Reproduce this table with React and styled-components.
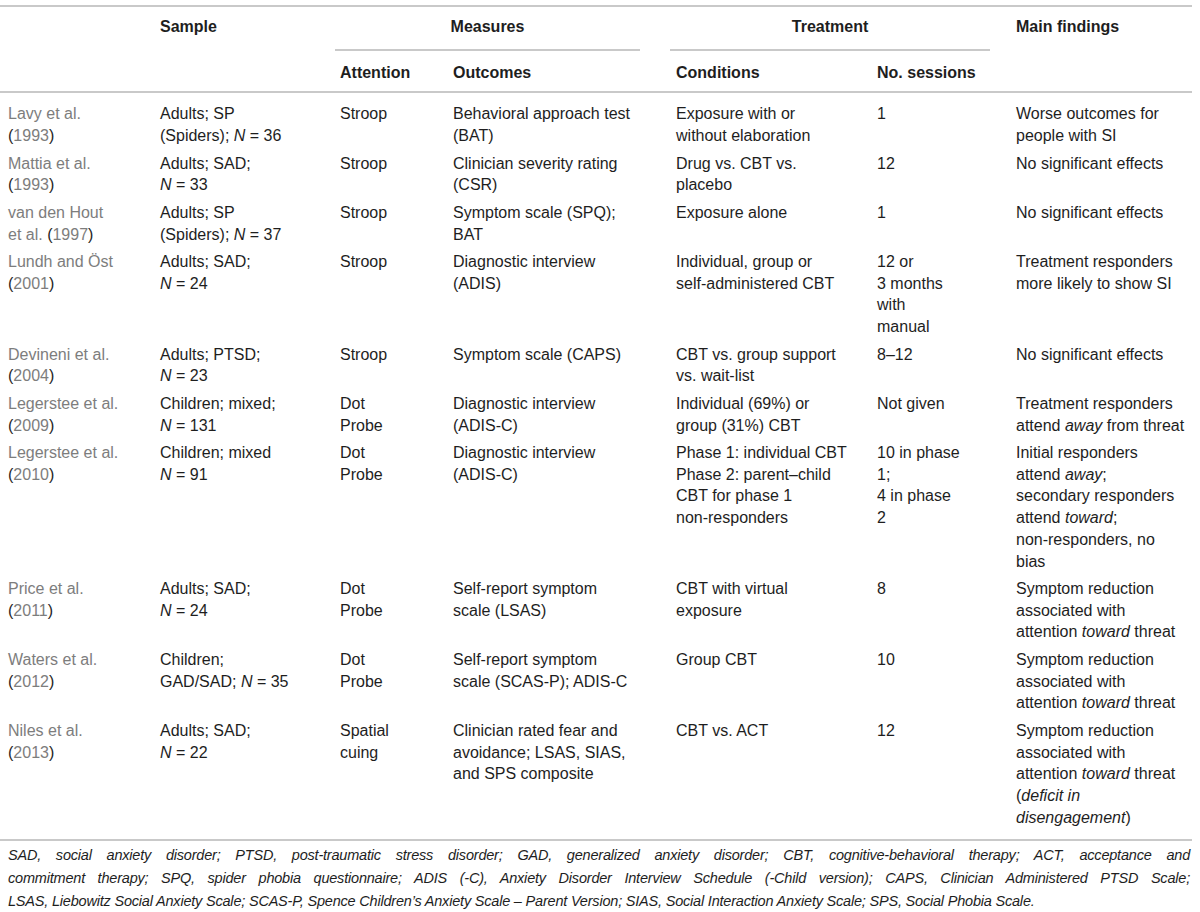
import React from 'react';
import styled, { createGlobalStyle } from 'styled-components';

const GlobalStyle = createGlobalStyle`
  body {
    margin: 0;
    background: #fff;
    font-family: "Liberation Sans", Arial, sans-serif;
    color: #1e1e1e;
  }
`

const RULE = '2px solid #c9c9c9';

const Page = styled.div`
  width: 1192px;
  padding-top: 5px;
`

const Table = styled.table`
  width: 1192px;
  border-collapse: collapse;
  table-layout: fixed;
  font-size: 16px;
  line-height: 21.7px;
  border-top: ${RULE};
`

const Head = styled.thead`
  border-bottom: ${RULE};
`

const Th = styled.th`
  text-align: left;
  vertical-align: top;
  font-weight: bold;
  white-space: nowrap;
  padding: ${p => (p.$sub ? '11px 6px 8px' : '9px 6px 0')};
  padding-left: ${p => (p.$first ? '8px' : '6px')};
`

const GroupTh = styled.th`
  padding: 0;
  vertical-align: top;
  font-weight: bold;
`

const GroupLabel = styled.div`
  margin: 0 ${p => p.$right}px 0 ${p => p.$left}px;
  padding: 9px 0 11px;
  border-bottom: ${RULE};
  text-align: center;
`

const Row = styled.tr`
  & > td {
    padding-top: ${p => p.$top}px;
    padding-bottom: ${p => p.$bottom}px;
  }
`

const Td = styled.td`
  vertical-align: top;
  white-space: nowrap;
  padding-left: 6px;
  padding-right: 6px;

  &:first-child {
    padding-left: 8px;
    color: #7d7d7d;
  }
`

const Paren = styled.span`
  color: #1e1e1e;
`

const I = styled.i`
  font-style: italic;
`

const Line = styled.div``

const Footnote = styled.div`
  border-top: ${RULE};
  padding: 3px 2px 0 8px;
  font-size: 14.5px;
  letter-spacing: -0.2px;
  line-height: 23px;
  font-style: italic;
`

const FootLine = styled.div`
  text-align: ${p => (p.$justify ? 'justify' : 'left')};
  text-align-last: ${p => (p.$justify ? 'justify' : 'left')};
`

const Study = ({ names, year, inline }) => {
  const y = <><Paren>(</Paren>{year}<Paren>)</Paren></>;
  return (
    <>
      {names.map((n, i) => (
        <Line key={i}>
          {n}
          {inline && i === names.length - 1 && <> {y}</>}
        </Line>
      ))}
      {!inline && <Line>{y}</Line>}
    </>
  );
};

const N = ({ v }) => <><I>N</I> = {v}</>;

const rows = [
  {
    study: { names: ['Lavy et al.'], year: '1993' },
    sample: ['Adults; SP', <>(Spiders); <N v="36" /></>],
    attention: ['Stroop'],
    outcomes: ['Behavioral approach test', '(BAT)'],
    conditions: ['Exposure with or', 'without elaboration'],
    sessions: ['1'],
    findings: ['Worse outcomes for', 'people with SI'],
  },
  {
    study: { names: ['Mattia et al.'], year: '1993' },
    sample: ['Adults; SAD;', <N v="33" />],
    attention: ['Stroop'],
    outcomes: ['Clinician severity rating', '(CSR)'],
    conditions: ['Drug vs. CBT vs.', 'placebo'],
    sessions: ['12'],
    findings: ['No significant effects'],
  },
  {
    study: { names: ['van den Hout', 'et al.'], year: '1997', inline: true },
    sample: ['Adults; SP', <>(Spiders); <N v="37" /></>],
    attention: ['Stroop'],
    outcomes: ['Symptom scale (SPQ);', 'BAT'],
    conditions: ['Exposure alone'],
    sessions: ['1'],
    findings: ['No significant effects'],
  },
  {
    study: { names: ['Lundh and Öst'], year: '2001' },
    sample: ['Adults; SAD;', <N v="24" />],
    attention: ['Stroop'],
    outcomes: ['Diagnostic interview', '(ADIS)'],
    conditions: ['Individual, group or', 'self-administered CBT'],
    sessions: ['12 or', '3 months', 'with', 'manual'],
    findings: ['Treatment responders', 'more likely to show SI'],
  },
  {
    study: { names: ['Devineni et al.'], year: '2004' },
    sample: ['Adults; PTSD;', <N v="23" />],
    attention: ['Stroop'],
    outcomes: ['Symptom scale (CAPS)'],
    conditions: ['CBT vs. group support', 'vs. wait-list'],
    sessions: ['8–12'],
    findings: ['No significant effects'],
  },
  {
    study: { names: ['Legerstee et al.'], year: '2009' },
    sample: ['Children; mixed;', <N v="131" />],
    attention: ['Dot', 'Probe'],
    outcomes: ['Diagnostic interview', '(ADIS-C)'],
    conditions: ['Individual (69%) or', 'group (31%) CBT'],
    sessions: ['Not given'],
    findings: ['Treatment responders', <>attend <I>away</I> from threat</>],
  },
  {
    study: { names: ['Legerstee et al.'], year: '2010' },
    sample: ['Children; mixed', <N v="91" />],
    attention: ['Dot', 'Probe'],
    outcomes: ['Diagnostic interview', '(ADIS-C)'],
    conditions: ['Phase 1: individual CBT', 'Phase 2: parent–child', 'CBT for phase 1', 'non-responders'],
    sessions: ['10 in phase', '1;', '4 in phase', '2'],
    findings: [
      'Initial responders',
      <>attend <I>away</I>;</>,
      'secondary responders',
      <>attend <I>toward</I>;</>,
      'non-responders, no',
      'bias',
    ],
  },
  {
    study: { names: ['Price et al.'], year: '2011' },
    sample: ['Adults; SAD;', <N v="24" />],
    attention: ['Dot', 'Probe'],
    outcomes: ['Self-report symptom', 'scale (LSAS)'],
    conditions: ['CBT with virtual', 'exposure'],
    sessions: ['8'],
    findings: ['Symptom reduction', 'associated with', <>attention <I>toward</I> threat</>],
  },
  {
    study: { names: ['Waters et al.'], year: '2012' },
    sample: ['Children;', <>GAD/SAD; <N v="35" /></>],
    attention: ['Dot', 'Probe'],
    outcomes: ['Self-report symptom', 'scale (SCAS-P); ADIS-C'],
    conditions: ['Group CBT'],
    sessions: ['10'],
    findings: ['Symptom reduction', 'associated with', <>attention <I>toward</I> threat</>],
  },
  {
    study: { names: ['Niles et al.'], year: '2013' },
    sample: ['Adults; SAD;', <N v="22" />],
    attention: ['Spatial', 'cuing'],
    outcomes: ['Clinician rated fear and', 'avoidance; LSAS, SIAS,', 'and SPS composite'],
    conditions: ['CBT vs. ACT'],
    sessions: ['12'],
    findings: [
      'Symptom reduction',
      'associated with',
      <>attention <I>toward</I> threat</>,
      <>(<I>deficit in</I></>,
      <><I>disengagement</I>)</>,
    ],
    bottom: 11,
  },
];

const Lines = ({ items }) => items.map((t, i) => <Line key={i}>{t}</Line>);

const widths = [154, 180, 113, 223, 201, 139, 182];

const App = () => {
  return (
    <Page>
      <GlobalStyle />
      <Table>
        <colgroup>
          {widths.map((w, i) => <col key={i} style={{ width: w }} />)}
        </colgroup>
        <Head>
          <tr>
            <Th rowSpan={2} $first />
            <Th rowSpan={2}>Sample</Th>
            <GroupTh colSpan={2}>
              <GroupLabel $left={1} $right={30}>Measures</GroupLabel>
            </GroupTh>
            <GroupTh colSpan={2}>
              <GroupLabel $left={0} $right={20}>Treatment</GroupLabel>
            </GroupTh>
            <Th rowSpan={2}>Main findings</Th>
          </tr>
          <tr>
            <Th $sub>Attention</Th>
            <Th $sub>Outcomes</Th>
            <Th $sub>Conditions</Th>
            <Th $sub>No. sessions</Th>
          </tr>
        </Head>
        <tbody>
          {rows.map((r, i) => (
            <Row key={i} $top={i === 0 ? 10 : 3} $bottom={r.bottom ?? 2.8}>
              <Td><Study {...r.study} /></Td>
              <Td><Lines items={r.sample} /></Td>
              <Td><Lines items={r.attention} /></Td>
              <Td><Lines items={r.outcomes} /></Td>
              <Td><Lines items={r.conditions} /></Td>
              <Td><Lines items={r.sessions} /></Td>
              <Td><Lines items={r.findings} /></Td>
            </Row>
          ))}
        </tbody>
      </Table>
      <Footnote>
        <FootLine $justify>
          SAD, social anxiety disorder; PTSD, post-traumatic stress disorder; GAD, generalized anxiety disorder; CBT, cognitive-behavioral therapy; ACT, acceptance and
        </FootLine>
        <FootLine $justify>
          commitment therapy; SPQ, spider phobia questionnaire; ADIS (-C), Anxiety Disorder Interview Schedule (-Child version); CAPS, Clinician Administered PTSD Scale;
        </FootLine>
        <FootLine>
          LSAS, Liebowitz Social Anxiety Scale; SCAS-P, Spence Children’s Anxiety Scale – Parent Version; SIAS, Social Interaction Anxiety Scale; SPS, Social Phobia Scale.
        </FootLine>
      </Footnote>
    </Page>
  );
};

export default App;
